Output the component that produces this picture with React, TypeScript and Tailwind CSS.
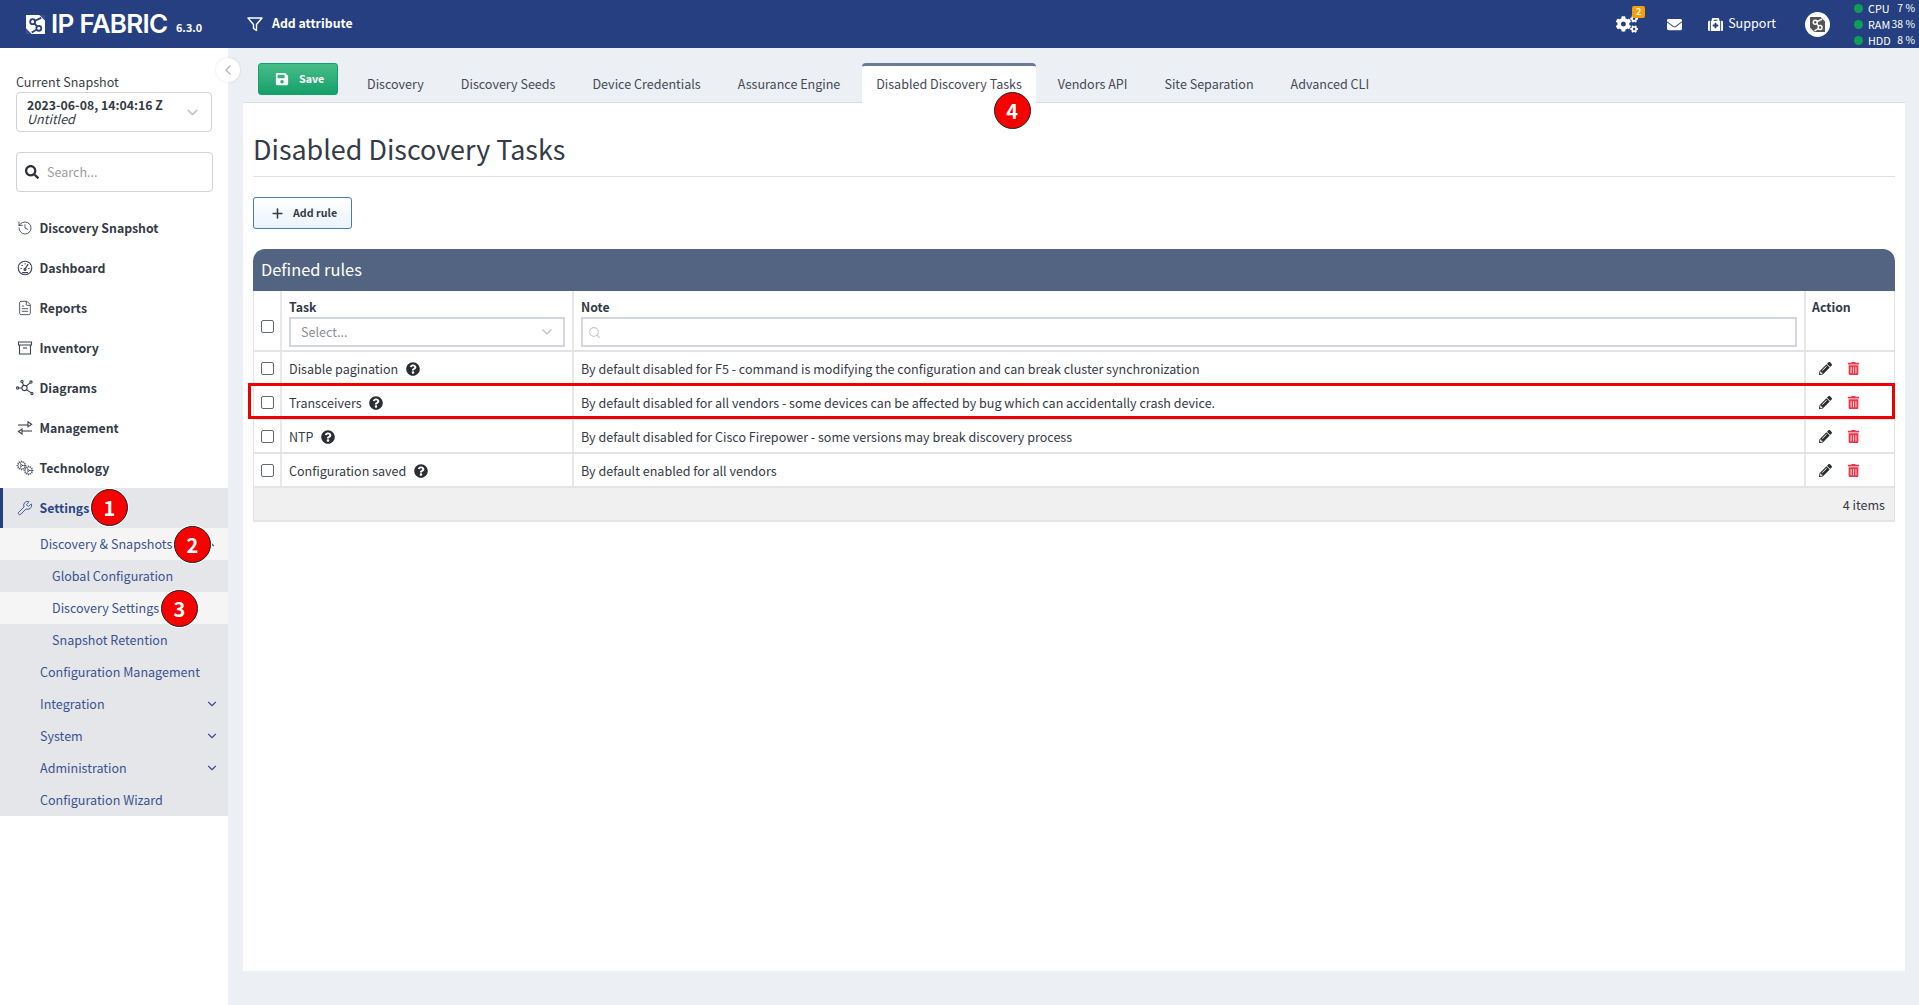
import React from "react";
import { FaCogs, FaEnvelope, FaMedkit, FaSave, FaSearch, FaQuestionCircle, FaPencilAlt, FaTrashAlt } from "react-icons/fa";
import { ChevronDown, ChevronUp, ChevronLeft, Plus, History, FileText, Cog, Wrench, Search } from "lucide-react";

const FONT = '"Noto Sans CJK SC","Open Sans",sans-serif';

function Logo({ size = 19, fg = "#fff", bg = "#253f80" }: { size?: number; fg?: string; bg?: string }) {
  return (
    <svg width={size} height={size} viewBox="0 0 20 20">
      <path d="M0 0H20V20H0Z" fill={fg} />
      <path d="M14 0H20V6Z M0 14V20H6Z" fill={bg} opacity="0.9" />
      <g fill="none" stroke={bg} strokeWidth="1.9">
        <circle cx="7" cy="7" r="2.6" />
        <circle cx="13.5" cy="14" r="2.6" />
        <path d="M9 9L11.6 12M9.5 6L16 3M11 15.5L6 18.5" />
      </g>
    </svg>
  );
}

function FunnelIcon() {
  return (
    <svg width="16" height="15" viewBox="0 0 16 15" fill="none" stroke="currentColor" strokeWidth="1.4" strokeLinejoin="round" className="ml-[44px]">
      <path d="M1 1H15L9.5 7.5V13.5L6.5 11.5V7.5Z" />
    </svg>
  );
}

function Gauge16() {
  return (
    <svg width="16" height="16" viewBox="0 0 16 16" fill="none" stroke="currentColor" strokeWidth="1.1" strokeLinecap="round">
      <circle cx="8" cy="8" r="6.8" />
      <path d="M8 9L10.8 4.6" strokeWidth="1.3" />
      <circle cx="8" cy="9.4" r="1" />
      <path d="M4 8.4H4.3M5 5.4H5.3M8 3.8H8.3M11.7 8.4H12" strokeWidth="1.2" />
      <path d="M5.4 12.6H10.6" />
    </svg>
  );
}

function Box16() {
  return (
    <svg width="16" height="16" viewBox="0 0 16 16" fill="none" stroke="currentColor" strokeWidth="1.1">
      <path d="M1.5 2H14.5V5H1.5Z" />
      <path d="M2.5 5V14H13.5V5" />
      <path d="M6 8H10" />
    </svg>
  );
}

function Graph16() {
  return (
    <svg width="18" height="16" viewBox="0 0 18 16" fill="none" stroke="currentColor" strokeWidth="1.1">
      <circle cx="8.5" cy="8" r="2.6" />
      <circle cx="1.6" cy="8" r="1.1" />
      <circle cx="6" cy="1.6" r="1.1" />
      <circle cx="15" cy="2" r="1.1" />
      <circle cx="16" cy="13.5" r="1.1" />
      <path d="M2.7 8H5.9M6.5 2.7L7.6 5.5M14 2.8L10.4 6.2M15 12.6L10.4 9.8" />
    </svg>
  );
}

function Arrows16() {
  return (
    <svg width="16" height="16" viewBox="0 0 16 16" fill="none" stroke="currentColor" strokeWidth="1.1">
      <path d="M1 5H11" />
      <path d="M11 1.8V6.6L14.6 4.2Z" />
      <path d="M15 11H5" />
      <path d="M5 9V14L1.4 11.5Z" />
    </svg>
  );
}

function TwoCogs() {
  return (
    <span className="relative block h-4 w-[18px]">
      <Cog size={11} strokeWidth={1.5} className="absolute left-0 top-0" />
      <Cog size={11} strokeWidth={1.5} className="absolute bottom-0 right-0" />
    </span>
  );
}

function Marker({ n, className }: { n: number; className: string }) {
  return (
    <div className={`absolute z-20 flex h-[37px] w-[37px] items-center justify-center rounded-full border-[1.5px] border-[#222] bg-[#f70000] text-[20px] font-bold text-white shadow-[0_0_0_1px_#fff] ${className}`}>
      {n}
    </div>
  );
}

const mainNav: [string, React.ReactNode][] = [
  ["Discovery Snapshot", <History size={16} strokeWidth={1.3} />],
  ["Dashboard", <Gauge16 />],
  ["Reports", <FileText size={16} strokeWidth={1.3} />],
  ["Inventory", <Box16 />],
  ["Diagrams", <Graph16 />],
  ["Management", <Arrows16 />],
  ["Technology", <TwoCogs />],
];

function Sidebar() {
  return (
    <aside className="relative z-10 flex w-[228px] shrink-0 flex-col bg-white">
      <div className="px-4 pt-[24px]">
        <div className="h-[20px] text-[12.55px] leading-[19px] text-[#3a3f47]">Current Snapshot</div>
        <div className="flex h-10 w-[196px] items-center justify-between rounded border border-[#cfd2d6] pl-[10px] pr-[10px]">
          <div className="text-[12.55px] leading-[14px] text-[#333a45]">
            <div className="text-[12.3px] font-semibold">2023-06-08, 14:04:16 Z</div>
            <div className="italic">Untitled</div>
          </div>
          <ChevronDown size={17} className="text-[#c4c7cc]" strokeWidth={2.5} />
        </div>
        <div className="mt-5 flex h-10 w-[197px] items-center rounded border border-[#cfd2d6] pl-2">
          <FaSearch size={14} className="text-[#2c3038]" />
          <span className="ml-[8px] text-[12.55px] text-[#9a9da3]">Search...</span>
        </div>
      </div>
      <nav className="mt-4 flex flex-col">
        {mainNav.map(([label, icon]) => (
          <div key={label} className="flex h-10 items-center pl-[16px] text-[12.3px] font-semibold text-[#343a46]">
            <span className="flex w-[18px] justify-center text-[#3d4350]">{icon}</span>
            <span className="ml-[5.5px]">{label}</span>
          </div>
        ))}
        <div className="flex h-10 items-center border-l-[3px] border-[#253f80] bg-[#e5e6ea] pl-[13px] text-[12.3px] font-semibold text-[#2b4685]">
          <span className="flex w-[18px] justify-center"><Wrench size={16} strokeWidth={1.3} /></span>
          <span className="ml-[5.5px]">Settings</span>
        </div>
        <div className="bg-[#e5e6ea] text-[12.55px] text-[#3a5290]">
          <div className="flex h-8 items-center justify-between bg-[#f5f5f5] pl-10 pr-[11px]">
            <span>Discovery &amp; Snapshots</span>
            <ChevronUp size={14} />
          </div>
          <div className="flex h-8 items-center pl-[52px]">Global Configuration</div>
          <div className="flex h-8 items-center bg-[#f5f5f5] pl-[52px]">Discovery Settings</div>
          <div className="flex h-8 items-center pl-[52px]">Snapshot Retention</div>
          <div className="flex h-8 items-center pl-10">Configuration Management</div>
          {["Integration", "System", "Administration"].map((l) => (
            <div key={l} className="flex h-8 items-center justify-between pl-10 pr-[9px]">
              <span>{l}</span>
              <ChevronDown size={14} />
            </div>
          ))}
          <div className="flex h-8 items-center pl-10">Configuration Wizard</div>
        </div>
      </nav>
      <div className="absolute left-[216px] top-[10px] flex h-6 w-6 items-center justify-center rounded-full bg-white shadow-[0_0_3px_rgba(0,0,0,0.12)]">
        <ChevronLeft size={16} className="text-[#b5b8bd]" />
      </div>
      <Marker n={1} className="left-[91px] top-[441px]" />
      <Marker n={2} className="left-[174px] top-[478px]" />
      <Marker n={3} className="left-[161px] top-[542px]" />
    </aside>
  );
}

const tabs = ["Discovery", "Discovery Seeds", "Device Credentials", "Assurance Engine", "Disabled Discovery Tasks", "Vendors API", "Site Separation", "Advanced CLI"];

function Tabs() {
  return (
    <div className="flex h-[55px] items-start border-b border-[#d9dce0] pl-[15px] pt-[15px]">
      <div className="flex h-8 w-20 items-center rounded-[3px] border border-[#12a06c] bg-gradient-to-b from-[#46bd88] to-[#0f9f6a] pl-[16px] text-[10.7px] font-semibold text-white">
        <FaSave size={14} />
        <span className="ml-[10px]">Save</span>
      </div>
      <div className="ml-[14.5px] flex h-[40px] gap-[8px]">
        {tabs.map((t) => {
          const active = t === "Disabled Discovery Tasks";
          return (
            <div
              key={t}
              className={
                active
                  ? "relative -mx-[1.2px] flex h-[40px] items-center rounded-t border-t-[3px] border-[#6b7a99] bg-white px-[14.5px] text-[12.55px] text-[#444a55]"
                  : "flex h-[40px] items-center px-[14.5px] pt-[3px] text-[12.55px] text-[#444a55]"
              }
            >
              {t}
              {active && <Marker n={4} className="left-[132px] top-[26px]" />}
            </div>
          );
        })}
      </div>
    </div>
  );
}

const rows = [
  ["Disable pagination", "By default disabled for F5 - command is modifying the configuration and can break cluster synchronization"],
  ["Transceivers", "By default disabled for all vendors - some devices can be affected by bug which can accidentally crash device."],
  ["NTP", "By default disabled for Cisco Firepower - some versions may break discovery process"],
  ["Configuration saved", "By default enabled for all vendors"],
];

function Check() {
  return <div className="h-[13px] w-[13px] rounded-[2px] border border-[#62666d] bg-white" />;
}

function Table() {
  return (
    <div className="mt-5 text-[12.55px] text-[#343a46]">
      <div className="flex h-[42px] items-center rounded-t-xl bg-[#526482] pb-[2px] pl-2 text-[16.4px] text-white">Defined rules</div>
      <div className="border-x border-b-2 border-[#e4e4e4]">
        <div className="flex h-[61px] border-b-2 border-[#e4e4e4]">
          <div className="flex w-[28px] shrink-0 items-center justify-center border-r-2 border-[#e8e8e8] pt-[12px]"><Check /></div>
          <div className="w-[292px] shrink-0 border-r-2 border-[#e8e8e8] px-[7px] pt-[6px]">
            <div className="h-5 text-[12.3px] font-bold leading-5">Task</div>
            <div className="flex h-[30px] items-center justify-between border-2 border-[#d3d6e2] pl-[10px] pr-[8px] text-[#8d9096]">
              <span>Select...</span>
              <ChevronDown size={16} strokeWidth={2.5} className="text-[#c4c7cc]" />
            </div>
          </div>
          <div className="min-w-0 flex-1 border-r-2 border-[#e8e8e8] px-[7px] pt-[6px]">
            <div className="h-5 text-[12.3px] font-bold leading-5">Note</div>
            <div className="flex h-[30px] items-center border-2 border-[#d3d6e2] pl-[5px]">
              <Search size={13} className="text-[#c4c7cc]" />
            </div>
          </div>
          <div className="w-[88px] shrink-0 px-[6px] pt-[6px] text-[12.3px] font-bold leading-5">Action</div>
        </div>
        {rows.map(([task, note], i) => (
          <div key={task} className="relative flex h-[34px] border-b-2 border-[#e4e4e4]">
            <div className="flex w-[28px] shrink-0 items-center justify-center border-r-2 border-[#e8e8e8]"><Check /></div>
            <div className="flex w-[292px] shrink-0 items-center border-r-2 border-[#e8e8e8] px-[7px] pt-[1px]">
              <span className="pt-[1px]">{task}</span>
              <FaQuestionCircle size={14} className="ml-[7.5px] text-[#2a2d33]" />
            </div>
            <div className="flex min-w-0 flex-1 items-center border-r-2 border-[#e8e8e8] px-[7px] pt-[2px]">{note}</div>
            <div className="flex w-[88px] shrink-0 items-center pl-[13px] pt-[1px]">
              <FaPencilAlt size={13} className="text-[#2a2d33]" />
              <FaTrashAlt size={13} className="ml-[15px] text-[#e8384a]" />
            </div>
            {i === 1 && <div className="pointer-events-none absolute -left-[6px] -right-[1px] -top-[3px] -bottom-[1px] border-[3px] border-[#ee0000]" />}
          </div>
        ))}
        <div className="flex h-[32px] items-center justify-end bg-[#f0f0f0] pr-[9px] pt-[2px]">4 items</div>
      </div>
    </div>
  );
}

function Header() {
  return (
    <header className="flex h-12 items-center bg-[#253f80] text-white">
      <div className="ml-[26px]"><Logo /></div>
      <span className="ml-[6px] w-[116px] whitespace-nowrap text-[26px] font-semibold leading-none tracking-[-0.7px]" style={{ fontFamily: 'Inter,sans-serif' }}>IP FABRIC</span>
      <span className="ml-[9px] mt-[7px] w-[27px] text-[10.8px] font-bold">6.3.0</span>
      <FunnelIcon />
      <span className="ml-[9px] -mt-[2px] text-[12.3px] font-semibold">Add attribute</span>
      <div className="flex-1" />
      <div className="relative">
        <FaCogs size={22} />
        <span className="absolute -right-[7px] -top-[7px] flex h-3 w-[13px] items-center justify-center rounded-[2px] bg-[#f59e0b] text-[9px] font-bold">2</span>
      </div>
      <FaEnvelope size={15} className="ml-[29px]" />
      <FaMedkit size={15} className="ml-[26px]" />
      <span className="ml-[5px] -mt-[1px] text-[12.55px]">Support</span>
      <div className="ml-[29px] flex h-[25px] w-[25px] items-center justify-center rounded-full bg-white"><Logo size={15} fg="#555" bg="#fff" /></div>
      <div className="ml-[24px] mr-[4px] w-[61px] text-[10.8px] leading-4">
        {[["CPU", "7"], ["RAM", "38"], ["HDD", "8"]].map(([k, v]) => (
          <div key={k} className="flex h-4 items-center whitespace-nowrap">
            <span className="h-[9px] w-[9px] shrink-0 rounded-full bg-[#0f9d58]" />
            <span className="ml-[5px]">{k}</span>
            <span className="ml-auto text-[10.4px]">{v} %</span>
          </div>
        ))}
      </div>
    </header>
  );
}

export default function App() {
  return (
    <div className="flex h-[1005px] flex-col overflow-hidden bg-[#eceff4]" style={{ fontFamily: FONT }}>
      <Header />
      <div className="flex min-h-0 flex-1">
        <Sidebar />
        <main className="ml-[15px] mr-[14px] min-w-0 flex-1">
          <div className="relative z-10"><Tabs /></div>
          <section className="h-[868px] bg-white px-[10px]">
            <h1 className="flex h-[74px] items-end border-b border-[#dfe1e4] pb-[9px] text-[26.9px] leading-9 text-[#343a46]">Disabled Discovery Tasks</h1>
            <div className="mt-5 flex h-8 w-[99px] items-center rounded-[3px] border border-[#4a7ab5] bg-gradient-to-b from-white to-[#eaf3fd] pl-[16px] text-[10.7px] font-semibold text-[#343a46]">
              <Plus size={15} strokeWidth={2.5} />
              <span className="ml-[8px]">Add rule</span>
            </div>
            <Table />
          </section>
        </main>
      </div>
    </div>
  );
}
